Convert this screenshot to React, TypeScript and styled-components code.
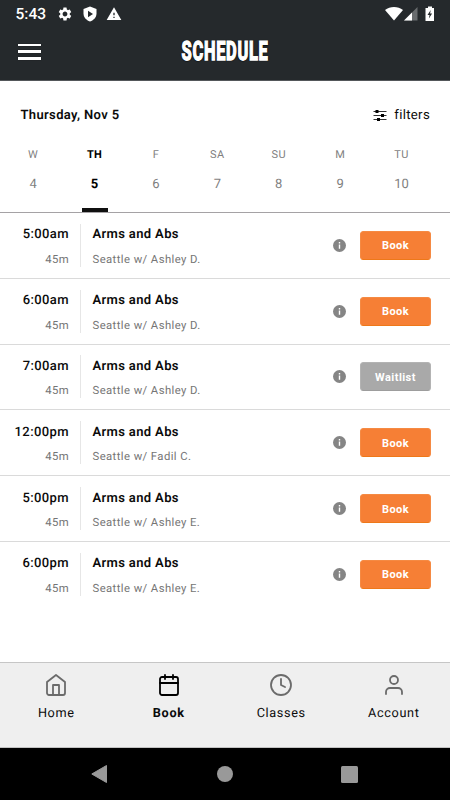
import React from "react";
import styled, { createGlobalStyle } from "styled-components";
import { FiHome, FiCalendar, FiClock, FiUser } from "react-icons/fi";
import { MdSettings, MdWarning } from "react-icons/md";

const GlobalStyle = createGlobalStyle`
  * { box-sizing: border-box; }
  body {
    margin: 0;
    background: #fff;
    font-family: Roboto, "Liberation Sans", sans-serif;
    text-rendering: geometricPrecision;
  }
`;

const Screen = styled.div`
  width: 450px;
  height: 800px;
  display: flex;
  flex-direction: column;
  background: #fff;
  color: #0b0b0b;
  overflow: hidden;
  white-space: nowrap;
`;

const Header = styled.header`
  height: 81px;
  flex: none;
  background: #25292c;
  border-bottom: 1px solid #54575a;
  color: #fff;
`;

const StatusBar = styled.div`
  height: 27px;
  display: flex;
  align-items: center;
  padding: 0 15px 0 15.5px;
`;

const Clock = styled.span`
  font-size: 15.5px;
  font-weight: 500;
  width: 41.5px;
  line-height: 27px;
  padding-top: 1px;
`;

const StatusIcons = styled.div<{ $gap: number; $right?: boolean }>`
  display: flex;
  align-items: center;
  gap: ${(p) => p.$gap}px;
  margin-left: ${(p) => (p.$right ? "auto" : "0")};
  svg { display: block; }
`;

const TitleBar = styled.div`
  height: 48px;
  display: grid;
  grid-template-columns: 60px 1fr 60px;
  align-items: center;
`;

const Burger = styled.div`
  margin-left: 18px;
  width: 23px;
  height: 16px;
  display: flex;
  flex-direction: column;
  justify-content: space-between;
`;

const BurgerLine = styled.span`
  height: 2.5px;
  background: #fff;
  box-shadow: 0 0 1px #0e1011;
`;

const Title = styled.h1`
  margin: 1px 0 0;
  justify-self: center;
  font-size: 26.5px;
  line-height: 48px;
  font-weight: 800;
  letter-spacing: 1.1px;
  transform: scaleX(0.62);
  -webkit-text-stroke: 1.3px #fff;
  text-shadow: 0 0 2px #000, 0 1px 1px #000, 1px 0 1px #000, -1px 0 1px #000;
`;

const DateRow = styled.div`
  height: 56px;
  display: flex;
  align-items: center;
  justify-content: space-between;
  padding: 12px 20px 0 20.5px;
`;

const DateLabel = styled.span`
  font-size: 13px;
  font-weight: 600;
  letter-spacing: 0.36px;
`;

const Filters = styled.div`
  display: flex;
  align-items: center;
  gap: 7px;
  font-size: 13.2px;
  letter-spacing: 0.3px;
  padding-top: 1px;
  svg { display: block; }
`;

const Week = styled.div`
  height: 76px;
  display: grid;
  grid-template-columns: repeat(7, 61.4px);
  padding-left: 2.5px;
  border-bottom: 1px solid #a5a2a5;
`;

const Day = styled.div<{ $active: boolean }>`
  display: flex;
  flex-direction: column;
  align-items: center;
  padding-top: 10px;
  color: ${(p) => (p.$active ? "#000" : "#7f7f7f")};
  font-weight: ${(p) => (p.$active ? 700 : 400)};
`;

const DayName = styled.span`
  font-size: 11px;
  line-height: 16px;
  letter-spacing: 0.4px;
`;

const DayNumber = styled.span`
  font-size: 13px;
  line-height: 18px;
  margin-top: 13px;
`;

const DayMark = styled.span`
  width: 26px;
  height: 4px;
  margin-top: auto;
  background: #101010;
`;

const List = styled.main`
  flex: 1;
  min-height: 0;
`;

const Row = styled.div<{ $last: boolean }>`
  height: 65.8px;
  display: flex;
  align-items: center;
  padding-right: 19px;
  border-bottom: 1px solid ${(p) => (p.$last ? "transparent" : "#dadada")};
`;

const TimeColumn = styled.div`
  width: 81px;
  height: 43px;
  padding-right: 11px;
  text-align: right;
  border-right: 1px solid #e6e6e6;
`;

const InfoColumn = styled.div`
  flex: 1;
  height: 43px;
  padding-left: 11.5px;
`;

const Primary = styled.div<{ $strong?: boolean }>`
  font-size: 13px;
  line-height: 20px;
  padding-top: 1.5px;
  font-weight: ${(p) => (p.$strong ? 600 : 500)};
  letter-spacing: ${(p) => (p.$strong ? 0.36 : 0.4)}px;
`;

const Secondary = styled.div`
  font-size: 11.3px;
  line-height: 18px;
  margin-top: 5.5px;
  color: #757575;
  letter-spacing: 0.42px;
`;

const InfoMark = styled.svg`
  display: block;
  width: 13px;
  height: 13px;
  margin-right: 14px;
`;

const Action = styled.button<{ $muted: boolean }>`
  width: 71px;
  height: 29px;
  padding: 1px 0 0;
  border: 1px solid ${(p) => (p.$muted ? "#b3b3b3" : "#f58a43")};
  border-bottom-color: ${(p) => (p.$muted ? "#9d9d9d" : "#ee7819")};
  border-radius: 3.5px;
  background: ${(p) => (p.$muted ? "#a9a9a9" : "#f67f35")};
  color: #fff;
  font-family: inherit;
  font-size: 11px;
  font-weight: 700;
  letter-spacing: 0.45px;
`;

const TabBar = styled.nav`
  height: 86px;
  flex: none;
  display: grid;
  grid-template-columns: repeat(4, 1fr);
  background: #efefef;
  border-top: 1px solid #c6c6c6;
  border-bottom: 1px solid #c2c2c2;
`;

const Tab = styled.div<{ $active: boolean }>`
  display: flex;
  flex-direction: column;
  align-items: center;
  padding-top: 10px;
  font-size: 12.7px;
  line-height: 18px;
  letter-spacing: 0.65px;
  font-weight: ${(p) => (p.$active ? 700 : 400)};
  svg {
    width: 24px;
    height: 24px;
    margin-bottom: 8px;
    stroke-width: 1.8px;
    color: ${(p) => (p.$active ? "#000" : "#6b6b6b")};
  }
`;

const SystemBar = styled.div`
  height: 52px;
  flex: none;
  display: grid;
  grid-template-columns: 1fr 16px 1fr;
  align-items: center;
  background: #000;
  svg { display: block; }
`;

const BackSlot = styled.div`
  justify-self: end;
  margin-right: 110px;
`;

const RecentsSlot = styled.div`
  justify-self: start;
  margin-left: 107.5px;
`;

const days = [
  ["W", "4"], ["TH", "5"], ["F", "6"], ["SA", "7"], ["SU", "8"], ["M", "9"], ["TU", "10"],
];

const classes = [
  { time: "5:00am", coach: "Ashley D.", action: "Book" },
  { time: "6:00am", coach: "Ashley D.", action: "Book" },
  { time: "7:00am", coach: "Ashley D.", action: "Waitlist" },
  { time: "12:00pm", coach: "Fadil C.", action: "Book" },
  { time: "5:00pm", coach: "Ashley E.", action: "Book" },
  { time: "6:00pm", coach: "Ashley E.", action: "Book" },
];

const tabs = [
  { label: "Home", Icon: FiHome },
  { label: "Book", Icon: FiCalendar },
  { label: "Classes", Icon: FiClock },
  { label: "Account", Icon: FiUser },
];

export default function App() {
  return (
    <>
      <GlobalStyle />
      <Screen>
        <Header>
          <StatusBar>
            <Clock>5:43</Clock>
            <StatusIcons $gap={8.5}>
              <MdSettings size={16} />
              <svg width="16" height="16" viewBox="0 0 16 16">
                <path d="M8 .5 14.5 3v4.6c0 3.7-2.6 6.7-6.5 8-3.9-1.3-6.5-4.3-6.5-8V3Z" fill="#fff" />
                <path d="M6 4.8 11 8l-5 3.2Z" fill="#25292c" />
              </svg>
              <MdWarning size={16} />
            </StatusIcons>
            <StatusIcons $gap={0} $right>
              <svg width="50" height="16" viewBox="0 0 50 16">
                <path d="M0 4C5-.1 13-.1 18 4L9 14.5Z" fill="#fff" />
                <path d="M32.5 1v13.500h-13.500Z" fill="#696c6e" />
                <path d="M27 6.500v8h-8Z" fill="#fff" />
                <path d="M43 .500h4V2h2v13h-8.500V2H43Z" fill="#fff" />
                <path d="m45.700 4-3.200 5h2l-.6 3.600 3.200-5h-2Z" fill="#25292c" />
              </svg>
            </StatusIcons>
          </StatusBar>
          <TitleBar>
            <Burger>
              <BurgerLine />
              <BurgerLine />
              <BurgerLine />
            </Burger>
            <Title>SCHEDULE</Title>
          </TitleBar>
        </Header>

        <DateRow>
          <DateLabel>Thursday, Nov 5</DateLabel>
          <Filters>
            <svg width="14" height="13" viewBox="0 0 14 13">
              <path d="M.5 2.500h13M.5 6.500h13M.5 10.500h13" stroke="#333" strokeWidth="1" />
              <path d="M2.500 1h3v3h-3zM8 5h3v3H8zM4 9h3v3H4z" fill="#000" />
            </svg>
            filters
          </Filters>
        </DateRow>

        <Week>
          {days.map(([name, number]) => (
            <Day key={name} $active={name === "TH"}>
              <DayName>{name}</DayName>
              <DayNumber>{number}</DayNumber>
              {name === "TH" && <DayMark />}
            </Day>
          ))}
        </Week>

        <List>
          {classes.map((c, i) => (
            <Row key={c.time} $last={i === classes.length - 1}>
              <TimeColumn>
                <Primary>{c.time}</Primary>
                <Secondary>45m</Secondary>
              </TimeColumn>
              <InfoColumn>
                <Primary $strong>Arms and Abs</Primary>
                <Secondary>Seattle w/ {c.coach}</Secondary>
              </InfoColumn>
              <InfoMark viewBox="0 0 13 13">
                <circle cx="6.500" cy="6.500" r="6.500" fill="#858585" />
                <path d="M5.800 3h1.400v1.400H5.800zM5.800 5.600h1.400v4.200H5.800z" fill="#fff" />
              </InfoMark>
              <Action $muted={c.action === "Waitlist"}>{c.action}</Action>
            </Row>
          ))}
        </List>

        <TabBar>
          {tabs.map(({ label, Icon }) => (
            <Tab key={label} $active={label === "Book"}>
              <Icon />
              {label}
            </Tab>
          ))}
        </TabBar>

        <SystemBar>
          <BackSlot>
            <svg width="16" height="18" viewBox="0 0 16 18">
              <path d="M15.500.5v17L.8 9Z" fill="#999" stroke="#999" strokeLinejoin="round" />
            </svg>
          </BackSlot>
          <svg width="16" height="16" viewBox="0 0 16 16">
            <circle cx="8" cy="8" r="8" fill="#999" />
          </svg>
          <RecentsSlot>
            <svg width="17" height="17" viewBox="0 0 17 17">
              <rect width="17" height="17" rx="1.500" fill="#999" />
            </svg>
          </RecentsSlot>
        </SystemBar>
      </Screen>
    </>
  );
}
